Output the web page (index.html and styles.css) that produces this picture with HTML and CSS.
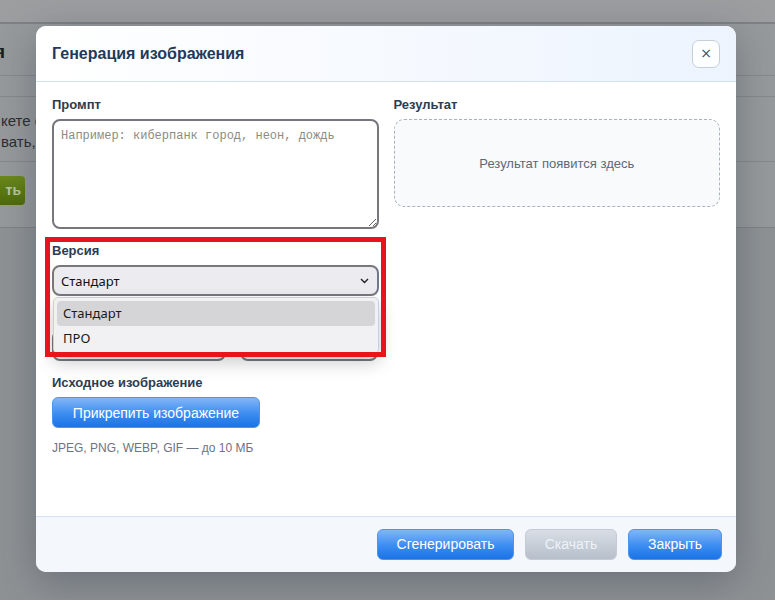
FILE: index.html
```html
<!DOCTYPE html>
<html lang="ru">
<head>
    <meta charset="UTF-8" />
    <meta name="viewport" content="width=device-width, initial-scale=1" />
    <title>Генерация изображения</title>
    <link rel="stylesheet" href="styles.css">
</head>
<body>
    <div class="page">
        <div class="topbar"></div>
        <div class="card">
            <div class="card-head"><span class="card-title">я</span></div>
            <div class="card-sub"></div>
            <div class="card-text">
                <p>кете свой запрос и получите картинку</p>
                <p>вать, пока идёт генерация изображения</p>
            </div>
            <div class="card-actions"><span class="btn-green">ть</span></div>
        </div>
    </div>

    <div class="backdrop">
        <div class="modal">
            <div class="modal-header">
                <h2 class="modal-title">Генерация изображения</h2>
                <button class="modal-close">&times;</button>
            </div>
            <div class="modal-body">
                <div class="col">
                    <label class="field-label">Промпт</label>
                    <textarea class="prompt" placeholder="Например: киберпанк город, неон, дождь"></textarea>

                    <label class="field-label label-gap">Версия</label>
                    <div class="select-wrap">
                        <div class="select">
                            <span>Стандарт</span>
                            <svg class="chevron" width="9" height="6" viewBox="0 0 9 6"><path d="M1 1l3.5 3.5L8 1" fill="none" stroke="#222" stroke-width="1.4"/></svg>
                        </div>
                        <div class="select-list">
                            <div class="option active">Стандарт</div>
                            <div class="option">ПРО</div>
                        </div>
                    </div>
                    <div class="size-row">
                        <span class="dot"></span>
                        <div class="size-input wide"></div>
                        <div class="size-input"></div>
                    </div>

                    <label class="field-label label-gap2">Исходное изображение</label>
                    <button class="btn btn-blue attach">Прикрепить изображение</button>
                    <div class="hint">JPEG, PNG, WEBP, GIF — до 10 МБ</div>
                </div>
                <div class="col">
                    <label class="field-label">Результат</label>
                    <div class="result">Результат появится здесь</div>
                </div>
            </div>
            <div class="modal-footer">
                <button class="btn btn-blue btn-generate">Сгенерировать</button>
                <button class="btn btn-gray btn-download">Скачать</button>
                <button class="btn btn-blue btn-close">Закрыть</button>
            </div>
        </div>
        <div class="highlight"></div>
    </div>
</body>
</html>
```

FILE: styles.css
```css
body {
    margin: 0;
    width: 775px;
    height: 600px;
    overflow: hidden;
    font-family: "Liberation Sans", Arial, sans-serif;
    background: #8e9295;
    position: relative;
}
.page {
    height: 600px;
}
.topbar {
    height: 22px;
    background: #9c9ea0;
    border-bottom: 2px solid #7e8285;
}
.card {
    background: #969a9c;
    border-bottom: 1px solid #7f8386;
}
.card-head {
    height: 51px;
    border-bottom: 1px solid #85898c;
    display: flex;
    align-items: center;
}
.card-title {
    font-size: 19px;
    font-weight: bold;
    color: #1c1f22;
    margin: 4px 0 0 -6px;
}
.card-sub {
    height: 20px;
    border-bottom: 1px solid #85898c;
}
.card-text {
    height: 65px;
    border-bottom: 1px solid #85898c;
    padding: 15px 0 0 1px;
    box-sizing: border-box;
    font-size: 15px;
    color: #2a2d30;
}
.card-text p {
    margin: 0 0 4px;
    line-height: 17px;
    white-space: nowrap;
}
.card-actions {
    height: 65px;
    padding-top: 14px;
    box-sizing: border-box;
}
.btn-green {
    display: inline-block;
    height: 29px;
    line-height: 29px;
    padding: 0 4px 0 0;
    width: 21px;
    text-align: right;
    background: linear-gradient(#6b8a1a, #4f6b0c);
    color: #b9c6a0;
    font-weight: bold;
    font-size: 14px;
    border-radius: 0 4px 4px 0;
}

.backdrop {
    position: absolute;
    inset: 0;
}
.modal {
    position: absolute;
    left: 36px;
    top: 26px;
    width: 700px;
    height: 546px;
    background: #fff;
    border-radius: 10px;
    box-shadow: 0 10px 40px rgba(40, 50, 65, 0.35);
    display: flex;
    flex-direction: column;
    overflow: hidden;
}
.modal-header {
    height: 55px;
    padding: 0 16px;
    display: flex;
    align-items: center;
    justify-content: space-between;
    background: linear-gradient(90deg, #ffffff, #edf4fe);
    border-bottom: 1px solid #cfe1f5;
}
.modal-title {
    margin: 0;
    font-size: 16px;
    font-weight: bold;
    color: #1f3a5c;
}
.modal-close {
    width: 28px;
    height: 28px;
    border: 1px solid #c5cdd8;
    border-radius: 7px;
    background: #fdfeff;
    color: #3a5078;
    font-size: 14px;
    line-height: 1;
    padding: 0 0 1px;
    font-family: "DejaVu Sans", sans-serif;
}
.modal-body {
    flex: 1;
    padding: 15px 16px 0;
    display: grid;
    grid-template-columns: 1fr 1fr;
    column-gap: 15px;
    align-items: start;
}
.col {
    display: flex;
    flex-direction: column;
    align-items: stretch;
}
.field-label {
    font-size: 13px;
    font-weight: bold;
    color: #2e3c4f;
    line-height: 16px;
    margin-bottom: 6px;
}
.label-gap {
    margin-top: 14px;
}
.label-gap2 {
    margin-top: 14px;
}
.prompt {
    height: 110px;
    box-sizing: border-box;
    border: 2px solid #76767e;
    border-radius: 8px;
    padding: 8px 7px;
    font-family: "Liberation Mono", monospace;
    font-size: 12px;
    resize: vertical;
    margin: 0;
}
.prompt::placeholder {
    color: #8c8a86;
}
.select-wrap {
    position: relative;
}
.select {
    height: 31px;
    box-sizing: border-box;
    border: 2px solid #77777f;
    border-radius: 8px;
    background: #ececf0;
    padding: 0 8px 0 7px;
    display: flex;
    align-items: center;
    justify-content: space-between;
    font-family: "Noto Sans", sans-serif;
    font-size: 13px;
    color: #111;
}
.chevron {
    margin-top: 1px;
}
.select-list {
    position: absolute;
    left: 1px;
    right: 0;
    top: 32px;
    background: #f1f1f3;
    border: 1px solid #cfcfd3;
    border-radius: 5px;
    padding: 3px 3px 2px;
    z-index: 2;
    box-shadow: 0 8px 18px rgba(0, 0, 0, 0.22);
    font-family: "Noto Sans", sans-serif;
    font-size: 13px;
    color: #1a1a1a;
}
.option {
    height: 25px;
    line-height: 25px;
    padding-left: 6px;
    border-radius: 4px;
}
.option.active {
    background: #d5d5d7;
}
.size-row {
    margin-top: 34px;
    display: flex;
    gap: 14px;
    position: relative;
}
.dot {
    position: absolute;
    left: 1px;
    top: -17px;
    width: 3px;
    height: 6px;
    background: #d98a3a;
}
.size-input {
    height: 31px;
    flex: 0 0 138px;
    box-sizing: border-box;
    border: 2px solid #77777f;
    border-radius: 8px;
    background: #f3f3f5;
}
.size-input.wide {
    flex: 0 0 174px;
}
.btn {
    height: 31px;
    border-radius: 6px;
    font-family: "Liberation Sans", Arial, sans-serif;
    font-size: 14px;
    color: #fff;
    padding: 0 12px;
    cursor: pointer;
}
.btn-blue {
    border: 1px solid #4d94ec;
    background: linear-gradient(#82b6f7, #3b8cf0 55%, #1b73e6);
}
.btn-gray {
    border: 1px solid #c4cbd5;
    background: linear-gradient(#d9dee5, #b6bfcb);
    color: #eef2f7;
}
.attach {
    align-self: flex-start;
    width: 208px;
}
.hint {
    margin-top: 13px;
    font-size: 12px;
    color: #6a7484;
}
.result {
    height: 88px;
    box-sizing: border-box;
    border: 1px dashed #aab2bd;
    border-radius: 10px;
    background: #f8fafc;
    display: flex;
    align-items: center;
    justify-content: center;
    font-size: 13px;
    color: #5d6878;
}
.modal-footer {
    height: 56px;
    box-sizing: border-box;
    padding: 0 14px 1px;
    display: flex;
    align-items: center;
    justify-content: flex-end;
    gap: 11px;
    background: #f4f8fd;
    border-top: 1px solid #d3e3f4;
}
.btn-generate {
    width: 137px;
}
.btn-download {
    width: 92px;
}
.btn-close {
    width: 94px;
}
.highlight {
    position: absolute;
    left: 45px;
    top: 237px;
    width: 341px;
    height: 120px;
    box-sizing: border-box;
    border: 5px solid #e4151f;
    z-index: 5;
}
```
